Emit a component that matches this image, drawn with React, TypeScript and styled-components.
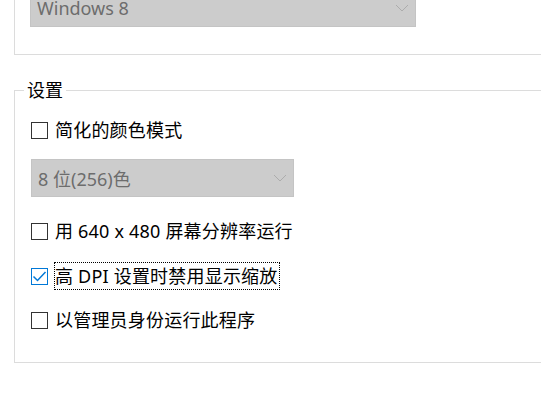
import React from 'react';
import styled, {createGlobalStyle} from "styled-components";

const GlobalStyle = createGlobalStyle`
  html, body {
    margin: 0;
    padding: 0;
    background: #ffffff;
  }

  body {
    font-family: "Segoe UI", "Noto Sans", "Noto Sans CJK SC", sans-serif;
    color: #000000;
  }
`

type Option = {
    label: string;
    checked?: boolean;
    focused?: boolean;
    mt: number;
};

const options: Option[] = [
    {label: "用 640 x 480 屏幕分辨率运行", mt: 22},
    {label: "高 DPI 设置时禁用显示缩放", checked: true, focused: true, mt: 21},
    {label: "以管理员身份运行此程序", mt: 20},
];

const Chevron = () => (
    <svg width="14" height="8" viewBox="0 0 14 8">
        <polyline points="1,1 7,7 13,1" fill="none" stroke="#acacac" strokeWidth="1"/>
    </svg>
);

const Check = () => (
    <svg width="15" height="15" viewBox="0 0 15 15">
        <polyline points="1.5,7.5 5.5,11.5 13.5,3" fill="none" stroke="#0078d7" strokeWidth="1.5"/>
    </svg>
);

const CheckRow = ({label, checked, focused, mt}: Option) => (
    <Row $mt={mt}>
        <Box $checked={!!checked}>{checked && <Check/>}</Box>
        <Label $focused={!!focused}>{label}</Label>
    </Row>
);

export default function App() {
    return (
        <>
            <GlobalStyle/>
            <Page>
                <TopGroup>
                    <Combo $width={386}>
                        <span>Windows 8</span>
                        <Chevron/>
                    </Combo>
                </TopGroup>

                <Group>
                    <Legend>设置</Legend>
                    <Content>
                        <CheckRow label="简化的颜色模式" mt={16}/>
                        <Combo $width={263} style={{marginTop: 17}}>
                            <span>8 位(256)色</span>
                            <Chevron/>
                        </Combo>
                        {options.map(o => <CheckRow key={o.label} {...o}/>)}
                    </Content>
                </Group>
            </Page>
        </>
    );
}

const Page = styled.div`
  width: 541px;
  height: 398px;
  overflow: hidden;
  padding-left: 14px;
  box-sizing: border-box;
`

const TopGroup = styled.div`
  width: 600px;
  margin-top: -60px;
  padding: 48px 0 27px 15px;
  border: 1px solid #dcdcdc;
  box-sizing: border-box;
`

const Group = styled.fieldset`
  width: 600px;
  margin: 23px 0 0 0;
  padding: 0 0 30px 9px;
  border: 1px solid #dcdcdc;
  box-sizing: border-box;
  min-width: 0;
`

const Legend = styled.legend`
  padding: 0 3px;
  font-size: 18px;
  line-height: 24px;
`

const Content = styled.div`
  display: flex;
  flex-direction: column;
  align-items: flex-start;
  padding-left: 7px;
`

const Combo = styled.div<{ $width: number }>`
  width: ${p => p.$width}px;
  height: 38px;
  box-sizing: border-box;
  display: flex;
  align-items: center;
  justify-content: space-between;
  padding: 0 6px 0 6px;
  background: #cccccc;
  border: 1px solid #c4c4c4;
  color: #6d6d6d;
  font-size: 18px;
`

const Row = styled.div<{ $mt: number }>`
  display: flex;
  align-items: center;
  height: 24px;
  margin-top: ${p => p.$mt}px;
`

const Box = styled.div<{ $checked: boolean }>`
  width: 17px;
  height: 17px;
  box-sizing: border-box;
  border: 1px solid ${p => p.$checked ? "#0078d7" : "#333333"};
  background: #ffffff;
  display: flex;
  align-items: center;
  justify-content: center;
`

const Label = styled.span<{ $focused: boolean }>`
  margin-left: ${p => p.$focused ? 6 : 7}px;
  padding: ${p => p.$focused ? "2px 1px 2px 0" : "3px 0"};
  border: ${p => p.$focused ? "1px dotted #000000" : "none"};
  font-size: 18px;
  line-height: 22px;
  letter-spacing: 0.2px;
  white-space: nowrap;
`
